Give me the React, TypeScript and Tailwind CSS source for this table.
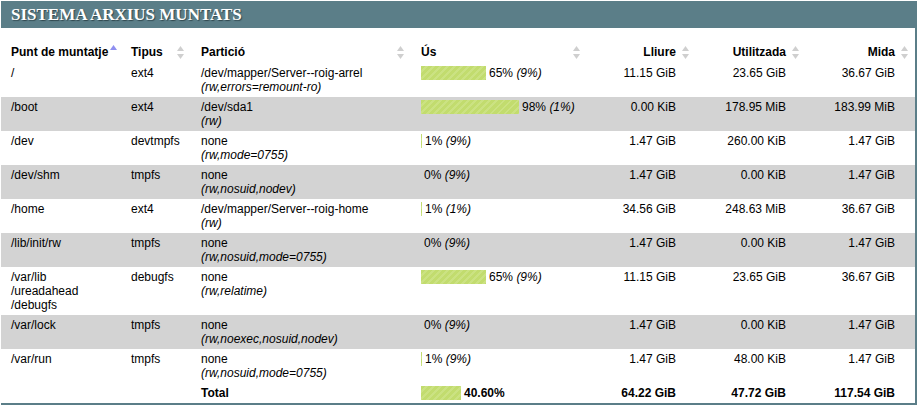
import React from 'react'

type Row = {
  mount: string[]
  type: string
  dev: string
  opts: string
  pct: number
  inode: string
  free: string
  used: string
  size: string
}

const rows: Row[] = [
  { mount: ['/'], type: 'ext4', dev: '/dev/mapper/Server--roig-arrel', opts: '(rw,errors=remount-ro)', pct: 65, inode: '(9%)', free: '11.15 GiB', used: '23.65 GiB', size: '36.67 GiB' },
  { mount: ['/boot'], type: 'ext4', dev: '/dev/sda1', opts: '(rw)', pct: 98, inode: '(1%)', free: '0.00 KiB', used: '178.95 MiB', size: '183.99 MiB' },
  { mount: ['/dev'], type: 'devtmpfs', dev: 'none', opts: '(rw,mode=0755)', pct: 1, inode: '(9%)', free: '1.47 GiB', used: '260.00 KiB', size: '1.47 GiB' },
  { mount: ['/dev/shm'], type: 'tmpfs', dev: 'none', opts: '(rw,nosuid,nodev)', pct: 0, inode: '(9%)', free: '1.47 GiB', used: '0.00 KiB', size: '1.47 GiB' },
  { mount: ['/home'], type: 'ext4', dev: '/dev/mapper/Server--roig-home', opts: '(rw)', pct: 1, inode: '(1%)', free: '34.56 GiB', used: '248.63 MiB', size: '36.67 GiB' },
  { mount: ['/lib/init/rw'], type: 'tmpfs', dev: 'none', opts: '(rw,nosuid,mode=0755)', pct: 0, inode: '(9%)', free: '1.47 GiB', used: '0.00 KiB', size: '1.47 GiB' },
  { mount: ['/var/lib', '/ureadahead', '/debugfs'], type: 'debugfs', dev: 'none', opts: '(rw,relatime)', pct: 65, inode: '(9%)', free: '11.15 GiB', used: '23.65 GiB', size: '36.67 GiB' },
  { mount: ['/var/lock'], type: 'tmpfs', dev: 'none', opts: '(rw,noexec,nosuid,nodev)', pct: 0, inode: '(9%)', free: '1.47 GiB', used: '0.00 KiB', size: '1.47 GiB' },
  { mount: ['/var/run'], type: 'tmpfs', dev: 'none', opts: '(rw,nosuid,mode=0755)', pct: 1, inode: '(9%)', free: '1.47 GiB', used: '48.00 KiB', size: '1.47 GiB' },
]

function SortIcon({ active }: { active?: boolean }) {
  return (
    <svg width="7" height="13" viewBox="0 0 7 13" className={active ? 'shrink-0 -mt-[2px]' : 'shrink-0'}>
      <polygon points="0,5 3.5,0 7,5" fill={active ? '#8f8ff0' : '#cfcfcf'} />
      {!active && <polygon points="0,8 3.5,13 7,8" fill="#cfcfcf" />}
    </svg>
  )
}

function Bar({ pct }: { pct: number }) {
  return (
    <span
      className="inline-block h-[14px] align-top bg-[#c2dc6e] bg-[repeating-linear-gradient(135deg,#c2dc6e_0px,#c2dc6e_3px,#cbe282_3px,#cbe282_5px)]"
      style={{ width: pct + 'px' }}
    />
  )
}

function Th({ label, right, active }: { label: string; right?: boolean; active?: boolean }) {
  return (
    <th className="pl-[10px] pr-[7px] pt-[3px] pb-[4px] font-bold align-top whitespace-nowrap">
      {right ? (
        <div className="flex items-center justify-end gap-[6px]">
          <span>{label}</span>
          <SortIcon />
        </div>
      ) : active ? (
        <div className="flex items-center gap-[2px]">
          <span>{label}</span>
          <SortIcon active />
        </div>
      ) : (
        <div className="flex items-center justify-between">
          <span>{label}</span>
          <SortIcon />
        </div>
      )}
    </th>
  )
}

export default function App() {
  return (
    <div className="min-h-screen bg-white font-['Liberation_Sans',Arial,sans-serif] text-[12px] leading-[14px] text-black">
      <div className="ml-px mt-px w-[916px]">
        <div className="h-[27px] bg-[#5b7e88] pl-[10px] flex items-center">
          <h2 className="font-['Liberation_Serif','Times_New_Roman',serif] font-bold text-[17px] leading-none text-white uppercase [text-shadow:1px_1px_1px_#2f474e]">
            Sistema arxius muntats
          </h2>
        </div>
        <div className="border-r-2 border-b-2 border-[#5b7e88] pt-[14px]">
          <table className="table-fixed border-collapse w-[914px]">
            <colgroup>
              <col className="w-[120px]" />
              <col className="w-[70px]" />
              <col className="w-[220px]" />
              <col className="w-[176px]" />
              <col className="w-[109px]" />
              <col className="w-[110px]" />
              <col className="w-[109px]" />
            </colgroup>
            <thead>
              <tr className="text-left">
                <Th label="Punt de muntatje" active />
                <Th label="Tipus" />
                <Th label="Partició" />
                <Th label="Ús" />
                <Th label="Lliure" right />
                <Th label="Utilitzada" right />
                <Th label="Mida" right />
              </tr>
            </thead>
            <tbody>
              {rows.map((r, i) => (
                <tr key={i} className={i % 2 === 1 ? 'bg-[#d3d3d3]' : 'bg-white'}>
                  <td className="pl-[10px] pr-[20px] py-[3px] align-top">
                    {r.mount.map((m, j) => (
                      <div key={j}>{m}</div>
                    ))}
                  </td>
                  <td className="pl-[10px] pr-[20px] py-[3px] align-top">{r.type}</td>
                  <td className="pl-[10px] pr-[20px] py-[3px] align-top">
                    <div>{r.dev}</div>
                    <div className="italic">{r.opts}</div>
                  </td>
                  <td className="pl-[10px] pr-[20px] py-[3px] align-top whitespace-nowrap">
                    <Bar pct={r.pct} />
                    <span className="ml-[3px]">
                      {r.pct}% <i>{r.inode}</i>
                    </span>
                  </td>
                  <td className="pl-[10px] pr-[20px] py-[3px] align-top text-right">{r.free}</td>
                  <td className="pl-[10px] pr-[20px] py-[3px] align-top text-right">{r.used}</td>
                  <td className="pl-[10px] pr-[20px] py-[3px] align-top text-right">{r.size}</td>
                </tr>
              ))}
              <tr className="font-bold">
                <td className="py-[3px]" />
                <td className="py-[3px]" />
                <td className="pl-[10px] pr-[20px] py-[3px] align-top">Total</td>
                <td className="pl-[10px] pr-[20px] py-[3px] align-top whitespace-nowrap">
                  <Bar pct={40} />
                  <span className="ml-[3px]">40.60%</span>
                </td>
                <td className="pl-[10px] pr-[20px] py-[3px] align-top text-right">64.22 GiB</td>
                <td className="pl-[10px] pr-[20px] py-[3px] align-top text-right">47.72 GiB</td>
                <td className="pl-[10px] pr-[20px] py-[3px] align-top text-right">117.54 GiB</td>
              </tr>
            </tbody>
          </table>
        </div>
      </div>
    </div>
  )
}
